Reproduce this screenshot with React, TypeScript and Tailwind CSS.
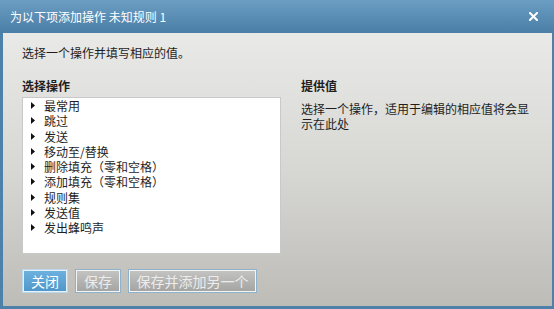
const font = { fontFamily: '"Noto Sans CJK SC", "Noto Sans", sans-serif' };

const actions = [
  '最常用',
  '跳过',
  '发送',
  '移动至/替换',
  '删除填充（零和空格）',
  '添加填充（零和空格）',
  '规则集',
  '发送值',
  '发出蜂鸣声',
];

function Caret() {
  return (
    <svg width="4" height="7" viewBox="0 0 4 7" className="shrink-0">
      <polygon points="0,0 4,3.5 0,7" fill="#111" />
    </svg>
  );
}

export default function App() {
  return (
    <div className="flex h-[309px] w-[554px] flex-col bg-[#4d81a9]" style={font}>
      {/* barra del titolo */}
      <div className="flex h-[33px] shrink-0 items-center justify-between bg-gradient-to-b from-[#6c9ec3] to-[#4a7ea6] pl-[10px] pr-[16px]">
        <span className="text-[12px] leading-[16px] text-white">为以下项添加操作 未知规则 1</span>
        <svg width="9" height="9" viewBox="0 0 9 9">
          <path d="M1 1 L8 8 M8 1 L1 8" stroke="#fff" strokeWidth="2" strokeLinecap="square" />
        </svg>
      </div>

      <div className="mb-[3px] ml-[3px] mr-[2px] flex flex-1 flex-col bg-gradient-to-b from-[#e9e9e7] via-[#d7d7d4] to-[#bdbcb7] px-[19px] pt-[12px] text-[12px] text-[#1e1e1e]">
        <p className="leading-[16px]">选择一个操作并填写相应的值。</p>

        <div className="mt-[17px] flex gap-[20px]">
          <div className="flex w-[259px] shrink-0 flex-col">
            <h2 className="font-bold leading-[16px]">选择操作</h2>
            <ul className="mt-[3px] h-[157px] border border-[#c9c9c9] bg-white">
              {actions.map((a) => (
                <li key={a} className="flex h-[15.25px] items-center gap-[9px] pl-[8px]">
                  <Caret />
                  <span className="block leading-[15px]">{a}</span>
                </li>
              ))}
            </ul>
          </div>

          <div className="flex w-[230px] shrink-0 flex-col">
            <h2 className="font-bold leading-[16px]">提供值</h2>
            <p className="mt-[7px] leading-[15px]">选择一个操作，适用于编辑的相应值将会显示在此处</p>
          </div>
        </div>

        <div className="mt-[15px] flex gap-[7px] text-[14px]">
          <button className="h-[24px] w-[46px] border border-[#bcd7ea] bg-gradient-to-b from-[#6db2df] to-[#4f96c9] leading-[20px] text-white shadow-[inset_0_0_0_1px_#e6f1f8]">
            关闭
          </button>
          <button className="h-[24px] w-[46px] border border-[#8fb2cc] bg-gradient-to-b from-[#c4c4c2] to-[#a3a3a1] leading-[20px] text-[#ececec] shadow-[inset_0_0_0_1px_#f4f4f4]">
            保存
          </button>
          <button className="h-[24px] w-[129px] border border-[#8fb2cc] bg-gradient-to-b from-[#c4c4c2] to-[#a3a3a1] leading-[20px] text-[#ececec] shadow-[inset_0_0_0_1px_#f4f4f4]">
            保存并添加另一个
          </button>
        </div>
      </div>
    </div>
  );
}
